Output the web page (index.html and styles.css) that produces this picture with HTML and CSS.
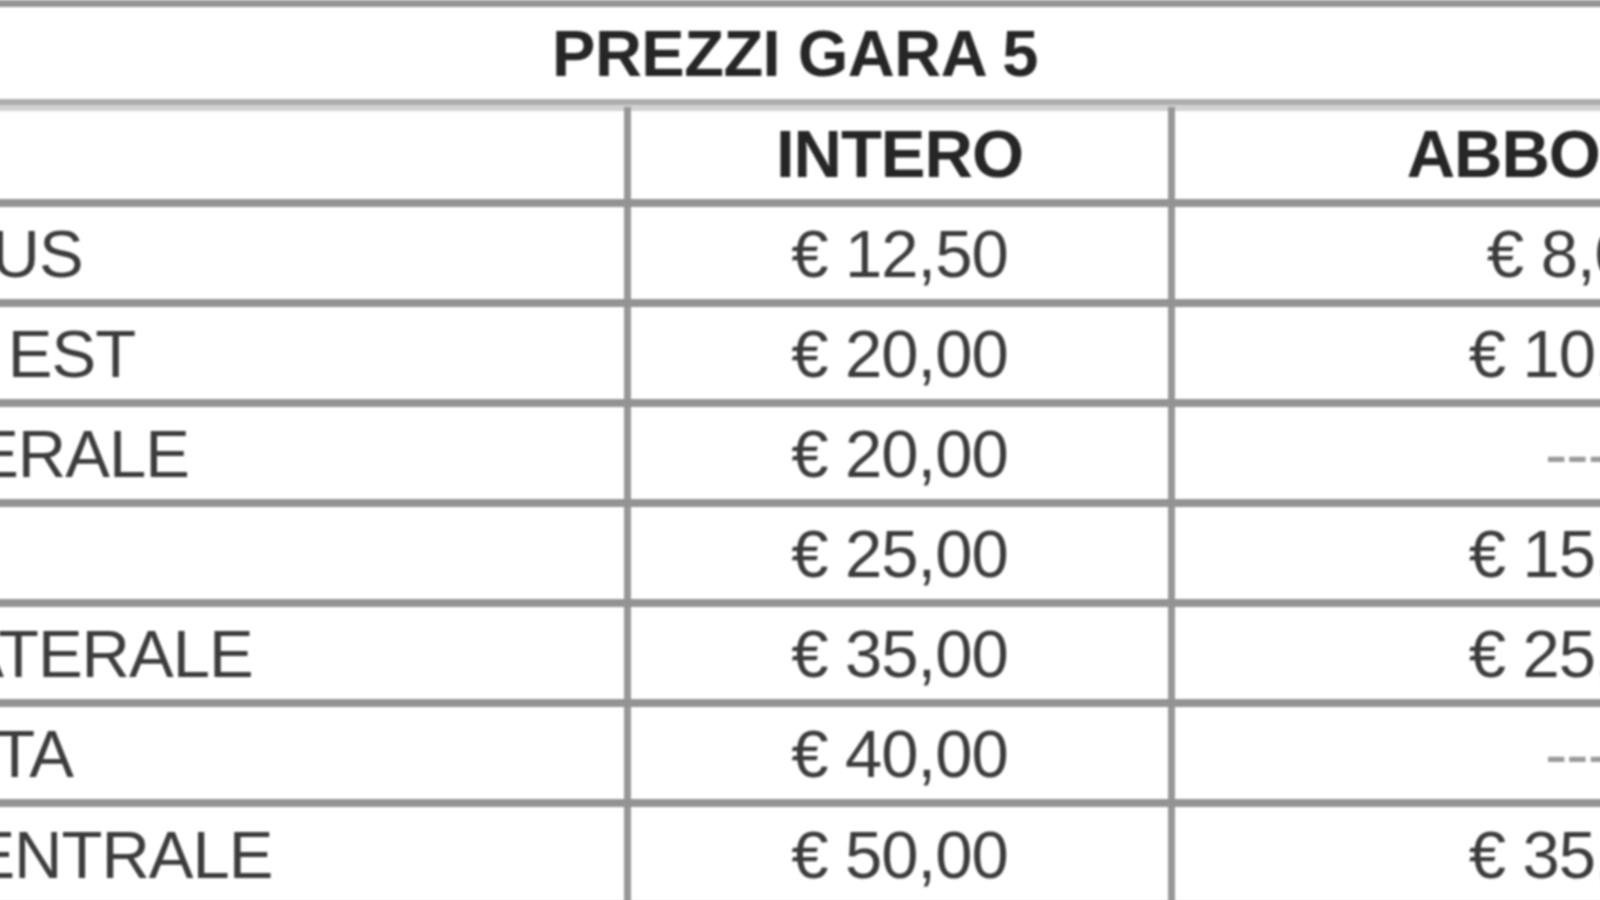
FILE: index.html
```html
<!DOCTYPE html>
<html lang="it">
<head>
<meta charset="utf-8">
<title>Prezzi Gara 5</title>
<link rel="stylesheet" href="styles.css">
</head>
<body>
<div class="viewport">
  <div class="sheet">
    <div class="title">PREZZI GARA 5</div>
    <div class="row head">
      <div class="cell name"></div>
      <div class="cell val">INTERO</div>
      <div class="cell val">ABBONATI</div>
    </div>
    <div class="row">
      <div class="cell name">SETTORE BUS</div>
      <div class="cell val">€ 12,50</div>
      <div class="cell val">€ 8,00</div>
    </div>
    <div class="row">
      <div class="cell name">GRADINATA EST</div>
      <div class="cell val">€ 20,00</div>
      <div class="cell val">€ 10,00</div>
    </div>
    <div class="row">
      <div class="cell name">CURVA LATERALE</div>
      <div class="cell val">€ 20,00</div>
      <div class="cell val dash">---</div>
    </div>
    <div class="row">
      <div class="cell name">TRIBUNA</div>
      <div class="cell val">€ 25,00</div>
      <div class="cell val">€ 15,00</div>
    </div>
    <div class="row">
      <div class="cell name">TRIBUNA LATERALE</div>
      <div class="cell val">€ 35,00</div>
      <div class="cell val">€ 25,00</div>
    </div>
    <div class="row">
      <div class="cell name">TRIBUNA ALTA</div>
      <div class="cell val">€ 40,00</div>
      <div class="cell val dash">---</div>
    </div>
    <div class="row">
      <div class="cell name">TRIBUNA CENTRALE</div>
      <div class="cell val">€ 50,00</div>
      <div class="cell val">€ 35,00</div>
    </div>
  </div>
</div>
</body>
</html>
```
FILE: styles.css
```css
html, body {
  margin: 0;
  padding: 0;
  background: #ffffff;
}

.viewport {
  width: 1600px;
  height: 900px;
  overflow: hidden;
}

.sheet {
  width: 2368px;
  margin-left: -389px;
  border-top: 7px solid #969696;
  font-family: "Liberation Sans", Arial, sans-serif;
  color: #333333;
  filter: blur(1px);
}

.title {
  height: 92px;
  display: flex;
  align-items: center;
  justify-content: center;
  font-weight: bold;
  font-size: 65px;
  letter-spacing: -0.5px;
  color: #262626;
  border-bottom: 6px solid #aeaeae;
  box-shadow: 0 6px 0 #d2d2d2;
  margin-bottom: 2px;
}

.row {
  display: grid;
  grid-template-columns: 1013px 544px 1fr;
  height: 100px;
  box-sizing: border-box;
  border-bottom: 8px solid #939393;
}

.row:last-child {
  height: 102px;
}

.cell {
  display: flex;
  align-items: center;
  font-size: 67px;
  letter-spacing: -1px;
  color: #3c3c3c;
}

.name {
  padding-left: 11px;
  justify-content: flex-start;
}

.val {
  justify-content: center;
  border-left: 7px solid #979797;
}

.head {
  height: 100px;
}

.head .cell {
  font-weight: bold;
  color: #262626;
}

.dash {
  color: #9a9a9a;
}
```
